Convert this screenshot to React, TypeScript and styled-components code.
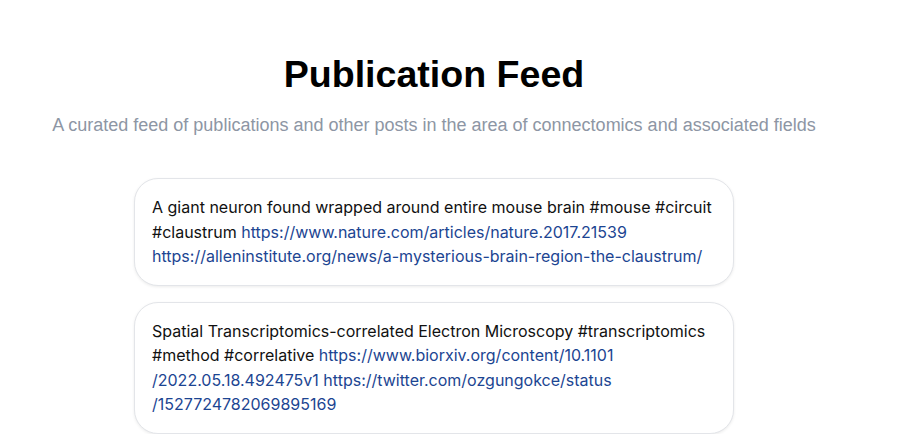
import styled, { createGlobalStyle } from 'styled-components';

interface FeedPost {
    id : number;
    parts : { text : string; href? : string }[];
}

const posts : FeedPost[] = [
    {
        id : 1,
        parts : [
            { text : 'A giant neuron found wrapped around entire mouse brain #mouse #circuit #claustrum ' },
            { text : 'https://www.nature.com/articles/nature.2017.21539', href : 'https://www.nature.com/articles/nature.2017.21539' },
            { text : ' ' },
            { text : 'https://alleninstitute.org/news/a-mysterious-brain-region-the-claustrum/', href : 'https://alleninstitute.org/news/a-mysterious-brain-region-the-claustrum/' },
        ],
    },
    {
        id : 2,
        parts : [
            { text : 'Spatial Transcriptomics-correlated Electron Microscopy #transcriptomics #method #correlative ' },
            { text : 'https://www.biorxiv.org/content/10.1101 /2022.05.18.492475v1', href : 'https://www.biorxiv.org/content/10.1101/2022.05.18.492475v1' },
            { text : ' ' },
            { text : 'https://twitter.com/ozgungokce/status /1527724782069895169', href : 'https://twitter.com/ozgungokce/status/1527724782069895169' },
        ],
    },
];

const GlobalStyle = createGlobalStyle`
    html, body {
        margin : 0;
        padding : 0;
        background : #ffffff;
    }
`;

const Page = styled.main`
    width : 868px;
    padding-top : 50px;
    display : flex;
    flex-direction : column;
    align-items : center;
`;

const Title = styled.h1`
    margin : 0;
    font-family : "Liberation Sans", Arial, sans-serif;
    font-weight : 700;
    font-size : 37.6px;
    line-height : 48px;
    color : #000000;
`;

const Subtitle = styled.p`
    margin : 15px 0 0 0;
    font-family : "Liberation Sans", Arial, sans-serif;
    font-size : 18px;
    line-height : 24px;
    color : #8d96a4;
`;

const FeedList = styled.ul`
    list-style : none;
    margin : 41px 0 0 0;
    padding : 0;
    display : flex;
    flex-direction : column;
    gap : 16px;
    width : 600px;
`;

const PostCard = styled.li`
    border : 1px solid #e3e5e9;
    border-radius : 24px;
    padding : 16px 16px 16px 17px;
    background : #ffffff;
    box-shadow : 0 1px 3px rgba(0, 0, 0, 0.08);
    font-family : Inter, "Noto Sans", sans-serif;
    font-size : 16px;
    line-height : 24.5px;
    color : #111111;
`;

const PostLink = styled.a`
    color : #1c4592;
    text-decoration : none;
`;

function App() {
    return (
        <>
            <GlobalStyle />
            <Page>
                <Title>Publication Feed</Title>
                <Subtitle>A curated feed of publications and other posts in the area of connectomics and associated fields</Subtitle>
                <FeedList>
                    {posts.map((post) => (
                    <PostCard key={`Post${post.id}`}>
                        {post.parts.map((part, PartIndex) => part.href ? (
                        <PostLink key={`Part${post.id}-${PartIndex}`} href={part.href}>{part.text}</PostLink>
                        ) : (
                        <span key={`Part${post.id}-${PartIndex}`}>{part.text}</span>
                        ))}
                    </PostCard>
                    ))}
                </FeedList>
            </Page>
        </>
    )
}

export default App;
